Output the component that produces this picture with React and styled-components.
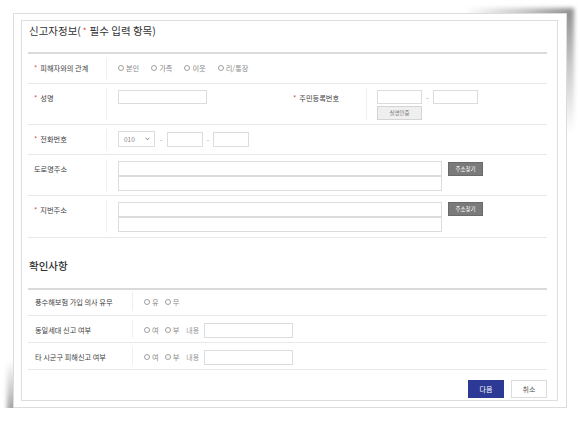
import React from "react";
import styled, { createGlobalStyle } from "styled-components";

const Global = createGlobalStyle`
  html { background: #fff; }
  html, body { margin: 0; padding: 0; }
  body { font-family: "Noto Sans CJK KR", "Noto Sans", sans-serif; color: #444; }
  * { box-sizing: border-box; }
`;

const Page = styled.div`
  position: relative;
  z-index: 0;
  padding: 13px 0 0 13px;
`;

const Paper = styled.div`
  position: relative;
  width: 554px;
  height: 395px;
  background: #fff;
  border: 1px solid #dcdcdc;
  padding: 6px 8px 6px 7px;
  &::before {
    content: "";
    position: absolute;
    z-index: -1;
    top: -6px;
    right: -8px;
    width: 110px;
    height: 125px;
    background: radial-gradient(ellipse 100% 100% at 100% 0%, rgba(0,0,0,0.45) 0%, rgba(0,0,0,0.22) 45%, rgba(0,0,0,0) 100%);
    filter: blur(2px);
  }
  &::after {
    content: "";
    position: absolute;
    z-index: -1;
    bottom: -8px;
    left: -7px;
    width: 120px;
    height: 55px;
    background: radial-gradient(ellipse 100% 100% at 0% 100%, rgba(0,0,0,0.42) 0%, rgba(0,0,0,0.2) 45%, rgba(0,0,0,0) 100%);
    filter: blur(2px);
  }
`;

const Panel = styled.div`
  height: 100%;
  border: 1px solid #dedede;
  padding: 0 10px 0 6px;
  display: flex;
  flex-direction: column;
`;

const Title = styled.h2`
  margin: ${p => p.$mt || 0}px 0 ${p => p.$mb || 0}px 1px;
  font-size: 10.5px;
  line-height: 18px;
  font-weight: ${p => (p.$bold ? 500 : 400)};
  color: #333;
  display: flex;
  align-items: center;
`;

const TitleStar = styled.span`
  color: #d0393a;
  font-size: 8px;
  margin: 0 3px 0 2px;
`;

const Table = styled.div`
  border-top: 2px solid #dadada;
`;

const Row = styled.div`
  display: flex;
  align-items: stretch;
  height: ${p => p.$h}px;
  padding: ${p => p.$pt ?? 4}px 0 4px;
  border-bottom: 1px solid #e8e8e8;
`;

const Label = styled.div`
  width: ${p => p.$w}px;
  flex: none;
  padding: 2px 0 0 ${p => p.$pl ?? 6}px;
  font-size: 7.2px;
  line-height: 16px;
  color: #3d3d3d;
  white-space: nowrap;
`;

const Star = styled.span`
  color: #d0393a;
  margin-right: 3px;
`;

const Cell = styled.div`
  width: ${p => (p.$w ? p.$w + "px" : "auto")};
  flex: ${p => (p.$w ? "none" : "1")};
  border-left: 1px solid #efefef;
  padding: 2px 0 0 ${p => p.$pl ?? 10}px;
  display: flex;
  flex-direction: ${p => (p.$col ? "column" : "row")};
  align-items: flex-start;
  gap: ${p => p.$gap ?? 0}px;
`;

const Line = styled.div`
  display: flex;
  align-items: center;
  gap: ${p => p.$gap ?? 0}px;
  height: ${p => p.$h ?? 16}px;
`;

const RadioItem = styled.label`
  display: inline-flex;
  align-items: center;
  gap: 2px;
  font-size: 7.2px;
  color: #888;
  margin-right: ${p => p.$mr ?? 12}px;
  white-space: nowrap;
`;

const Circle = styled.span`
  width: 6px;
  height: 6px;
  border: 1px solid #a0a0a0;
  border-radius: 50%;
  display: inline-block;
  background: #fff;
`;

const Input = styled.div`
  width: ${p => p.$w}px;
  height: ${p => p.$h ?? 15}px;
  border: 1px solid #dcdcdc;
  background: #fff;
`;

const Dash = styled.span`
  font-size: 7px;
  color: #999;
  width: ${p => p.$w ?? 12}px;
  text-align: center;
`;

const Select = styled.div`
  width: 37px;
  height: 16px;
  border: 1px solid #dcdcdc;
  display: flex;
  align-items: center;
  justify-content: space-between;
  padding: 0 4px 0 5px;
  font-size: 6.5px;
  color: #888;
`;

const Chev = styled.svg`
  width: 5px;
  height: 4px;
`;

const GreyBtn = styled.div`
  width: ${p => p.$w}px;
  height: 14px;
  display: flex;
  align-items: center;
  justify-content: center;
  font-size: 5.5px;
  background: ${p => (p.$dark ? "#7a7a7a" : "#efefef")};
  color: ${p => (p.$dark ? "#fff" : "#777")};
  border: 1px solid ${p => (p.$dark ? "#6a6a6a" : "#d4d4d4")};
  margin: ${p => p.$m ?? 0};
`;

const AddrRow = styled.div`
  display: flex;
  align-items: flex-start;
  gap: 6px;
`;

const Stack = styled.div`
  display: flex;
  flex-direction: column;
`;

const Small = styled.span`
  font-size: 7px;
  color: #999;
  margin: 0 5px 0 7px;
`;

const Footer = styled.div`
  display: flex;
  justify-content: flex-end;
  gap: 7px;
  margin-top: 10px;
`;

const Button = styled.button`
  width: 36px;
  height: 18px;
  padding: 0;
  font-family: inherit;
  font-size: 7px;
  border: 1px solid ${p => (p.$primary ? "#2c3a96" : "#dcdcdc")};
  background: ${p => (p.$primary ? "#2c3a96" : "#fff")};
  color: ${p => (p.$primary ? "#fff" : "#555")};
`;

const Radios = ({ items, mr }) => (
  <Line>
    {items.map(t => (
      <RadioItem key={t} $mr={mr}>
        <Circle />
        {t}
      </RadioItem>
    ))}
  </Line>
);

const YesNoMemo = () => (
  <Line>
    <RadioItem $mr={6}><Circle />여</RadioItem>
    <RadioItem $mr={0}><Circle />부</RadioItem>
    <Small>내용</Small>
    <Input $w={89} />
  </Line>
);

export default function App() {
  return (
    <Page>
      <Global />
      <Paper>
        <Panel>
          <Title $mt={1} $mb={12}>
            신고자정보(<TitleStar>*</TitleStar>필수 입력 항목)
          </Title>
          <Table>
            <Row $h={30}>
              <Label $w={78}><Star>*</Star>피해자와의 관계</Label>
              <Cell $pl={11}>
                <Radios items={["본인", "가족", "이웃", "리/통장"]} mr={12} />
              </Cell>
            </Row>
            <Row $h={41}>
              <Label $w={78}><Star>*</Star>성명</Label>
              <Cell $w={181} $pl={11}>
                <Input $w={89} $h={14} />
              </Cell>
              <Label $w={79} $pl={6}><Star>*</Star>주민등록번호</Label>
              <Cell $pl={10} $col $gap={2}>
                <Line $h={14}>
                  <Input $w={45} $h={14} />
                  <Dash $w={11}>-</Dash>
                  <Input $w={45} $h={14} />
                </Line>
                <GreyBtn $w={45}>실명인증</GreyBtn>
              </Cell>
            </Row>
            <Row $h={30}>
              <Label $w={78}><Star>*</Star>전화번호</Label>
              <Cell $pl={11}>
                <Line>
                  <Select>
                    010
                    <Chev viewBox="0 0 5 4">
                      <path d="M0.6 0.8 L2.5 2.8 L4.4 0.8" fill="none" stroke="#777" strokeWidth="0.9" />
                    </Chev>
                  </Select>
                  <Dash>-</Dash>
                  <Input $w={36} />
                  <Dash $w={10}>-</Dash>
                  <Input $w={36} />
                </Line>
              </Cell>
            </Row>
            <Row $h={41}>
              <Label $w={78}>도로명주소</Label>
              <Cell $pl={11}>
                <AddrRow>
                  <Stack>
                    <Input $w={324} />
                    <Input $w={324} />
                  </Stack>
                  <GreyBtn $dark $w={35} $m="1px 0 0 0">주소찾기</GreyBtn>
                </AddrRow>
              </Cell>
            </Row>
            <Row $h={42}>
              <Label $w={78}><Star>*</Star>지번주소</Label>
              <Cell $pl={11}>
                <AddrRow>
                  <Stack>
                    <Input $w={324} />
                    <Input $w={324} />
                  </Stack>
                  <GreyBtn $dark $w={35}>주소찾기</GreyBtn>
                </AddrRow>
              </Cell>
            </Row>
          </Table>

          <Title $mt={19} $mb={13} $bold>확인사항</Title>
          <Table>
            <Row $h={26} $pt={2}>
              <Label $w={104} $pl={7}>풍수해보험 가입 의사 유무</Label>
              <Cell $pl={11}>
                <Radios items={["유", "무"]} mr={6} />
              </Cell>
            </Row>
            <Row $h={27}>
              <Label $w={104} $pl={7}>동일세대 신고 여부</Label>
              <Cell $pl={11}>
                <YesNoMemo />
              </Cell>
            </Row>
            <Row $h={27}>
              <Label $w={104} $pl={7}>타 시군구 피해신고 여부</Label>
              <Cell $pl={11}>
                <YesNoMemo />
              </Cell>
            </Row>
          </Table>
          <Footer>
            <Button $primary>다음</Button>
            <Button>취소</Button>
          </Footer>
        </Panel>
      </Paper>
    </Page>
  );
}
